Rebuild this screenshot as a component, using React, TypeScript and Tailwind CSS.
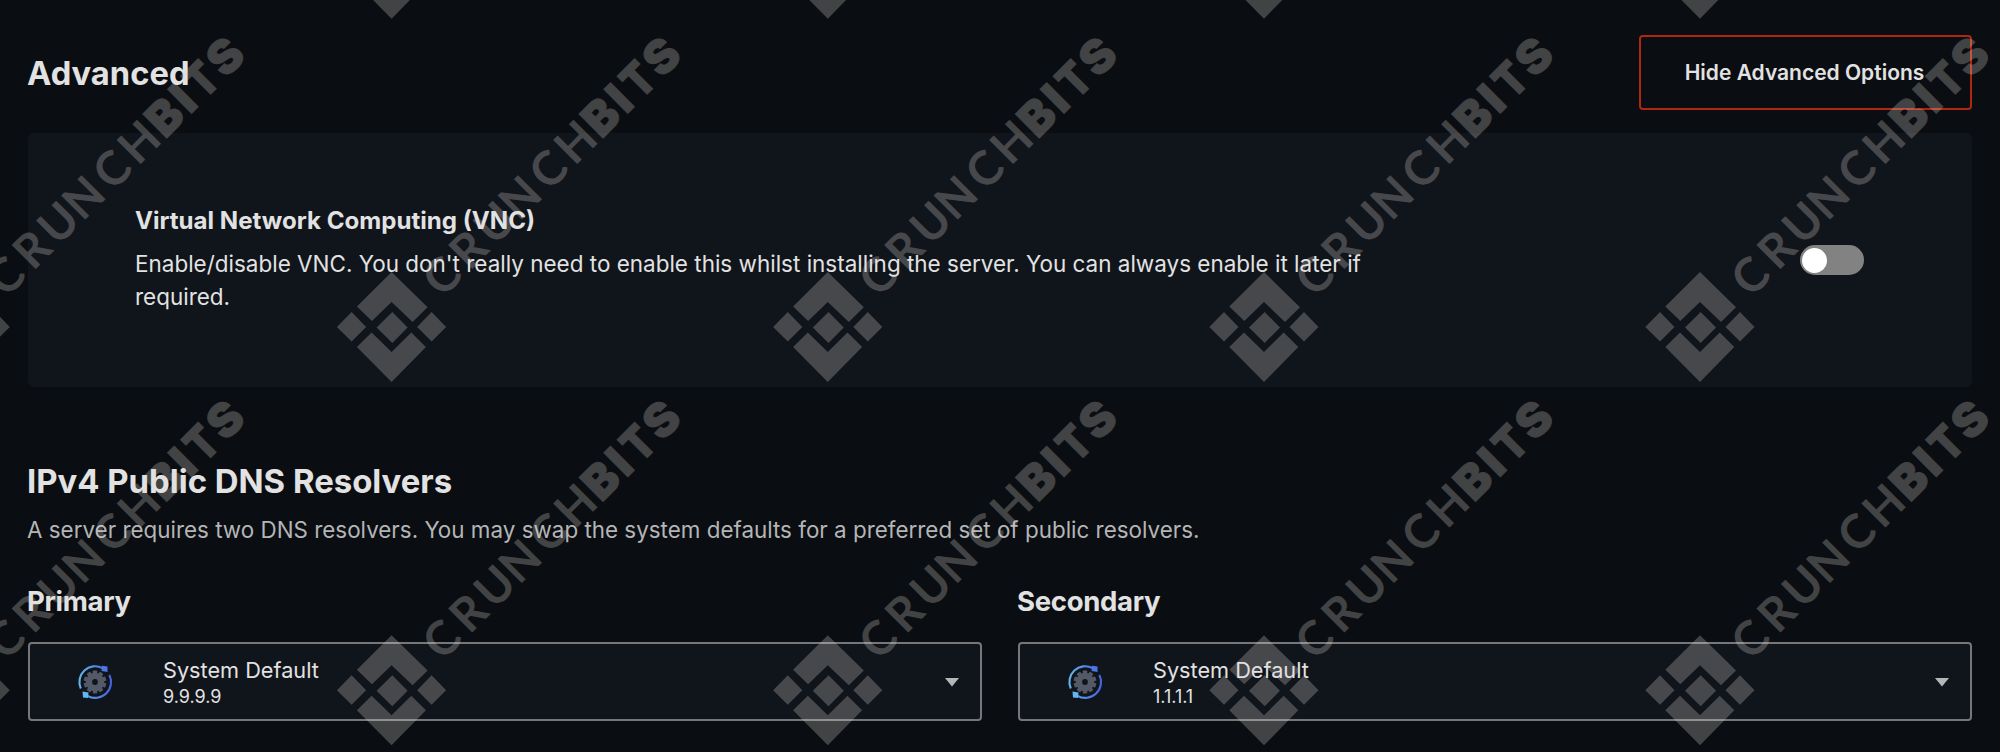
import React, { useState } from "react";

const GLYPHS = [
  { ch: "C", x: 56, black: false },
  { ch: "R", x: 94, black: false },
  { ch: "U", x: 129, black: false },
  { ch: "N", x: 164, black: false },
  { ch: "C", x: 206.5, black: false },
  { ch: "H", x: 242.5, black: false },
  { ch: "B", x: 281, black: true },
  { ch: "I", x: 316, black: true },
  { ch: "T", x: 335.5, black: true, width: 27 },
  { ch: "S", x: 366.5, black: true },
];
const COLS = [-44.7, 391.6, 827.8, 1264, 1700];
const ROWS = [-36.3, 327, 690.3];

function Brand({ x, y }: { x: number; y: number }) {
  return (
    <g transform={`translate(${x} ${y})`}>
      <path d="M0 -55L36 -19.7L21 -5L0 -25L-19.7 -6L-34.7 -20.5Z" />
      <path d="M0 55L34.3 20L19.7 5.5L0 25L-20 5.5L-34.7 20Z" />
      <path d="M-54.7 0L-40 -15L-25.5 0L-40 14.5ZM25.5 0L40 -15L54.5 0L40 14.5ZM-15 0.5L0.7 -15L16 0.5L0.7 16Z" />
      {y > 0 && (
        <g transform="rotate(-45)">
          {GLYPHS.map((g, i) => (
            <text
              key={i}
              x={g.x}
              y={16}
              className={
                g.black
                  ? "stroke-[#e0dcd6] stroke-1 font-['Inter',sans-serif] text-[46.5px] font-black"
                  : "font-['Lato',sans-serif] text-[47px] font-bold"
              }
              textLength={g.width}
              lengthAdjust={g.width ? "spacingAndGlyphs" : undefined}
            >
              {g.ch}
            </text>
          ))}
        </g>
      )}
    </g>
  );
}

function SyncGear({ id }: { id: string }) {
  return (
    <svg viewBox="0 0 36 36" className="size-9" fill="none">
      <defs>
        <linearGradient id={id} x1="1" y1="18" x2="35" y2="18" gradientUnits="userSpaceOnUse">
          <stop stopColor="#62b8f0" />
          <stop offset="1" stopColor="#4560dc" />
        </linearGradient>
      </defs>
      <g stroke={`url(#${id})`} strokeWidth="2.1">
        <path d="M3.8 24.5A15.8 15.8 0 0 1 25.5 4" />
        <path d="M32.4 11A15.8 15.8 0 0 1 10.5 31.8" />
      </g>
      <path d="M25 1.8L30.5 2.5L30.5 8L24.5 7Z" fill="#4f74ea" />
      <path d="M5.5 27.5L11.5 28.5L11 34L6 33.5Z" fill="#62b8f0" />
      <g fill="#545967">
        {[0, 36, 72, 108, 144].map((a) => (
          <rect key={a} x="15.8" y="6.6" width="4.4" height="22.8" rx="0.6" transform={`rotate(${a} 18 18)`} />
        ))}
        <circle cx="18" cy="18" r="9.2" />
      </g>
      <circle cx="18" cy="18" r="2.9" fill="#10141b" />
    </svg>
  );
}

function Resolver({ label, ip }: { label: string; ip: string }) {
  return (
    <div>
      <h3 className="-ml-px text-[27.5px] leading-9 font-bold tracking-[-0.3px]">{label}</h3>
      <button className="mt-[23px] flex h-[79px] w-full items-center rounded-[4px] border-2 border-[#75777a] bg-[#10141b] pr-5 pl-[47px] text-left">
        <SyncGear id={label} />
        <span className="ml-[50px] flex-1 pt-0.5">
          <span className="block text-[21.7px] leading-[28px]">System Default</span>
          <span className="block text-[18px] leading-[26px]">{ip}</span>
        </span>
        <svg viewBox="0 0 16 10" className="h-[10px] w-4">
          <path d="M1 1H15L8 9.5Z" fill="#b5b6b7" />
        </svg>
      </button>
    </div>
  );
}

export default function App() {
  const [vnc, setVnc] = useState(false);
  return (
    <main className="relative h-[752px] w-full overflow-hidden bg-[#0a0d11] px-7 pt-[35px] font-['Inter',sans-serif] text-[#e2e2e2]">
      <header className="flex items-center justify-between">
        <h2 className="-ml-px text-[32.7px] leading-10 font-bold">Advanced</h2>
        <button className="h-[75px] w-[333px] rounded-[4px] border-2 border-[#b02710] pr-0.5 text-[21px] font-semibold">
          Hide Advanced Options
        </button>
      </header>

      <section className="mt-[23px] flex h-[254px] items-center justify-between rounded-[5px] bg-[#10141b] pr-[108px] pl-[107px]">
        <div className="w-[1260px] pb-0.5">
          <h3 className="text-[24.1px] leading-8 font-bold">Virtual Network Computing (VNC)</h3>
          <p className="mt-2.5 text-[22.48px] leading-[33px]">
            Enable/disable VNC. You don't really need to enable this whilst installing the server. You can always enable
            it later if required.
          </p>
        </div>
        <button
          role="switch"
          aria-checked={vnc}
          onClick={() => setVnc(!vnc)}
          className="flex h-[30px] w-16 items-center rounded-full bg-[#828282] px-[2px]"
        >
          <span className="size-[25px] rounded-full bg-white" />
        </button>
      </section>

      <section className="mt-[74px]">
        <h2 className="-ml-px text-[32.9px] leading-10 font-bold">IPv4 Public DNS Resolvers</h2>
        <p className="-ml-px mt-[13px] text-[22.42px] leading-8 text-[#b4b5b6]">
          A server requires two DNS resolvers. You may swap the system defaults for a preferred set of public resolvers.
        </p>
        <div className="mt-[37px] grid grid-cols-2 gap-9">
          <Resolver label="Primary" ip="9.9.9.9" />
          <Resolver label="Secondary" ip="1.1.1.1" />
        </div>
      </section>

      <svg
        aria-hidden="true"
        viewBox="0 0 2000 752"
        className="pointer-events-none absolute inset-0 h-[752px] w-[2000px] opacity-[0.26]"
        fill="#e0dcd6"
      >
        {ROWS.map((y) => COLS.map((x) => <Brand key={`${x}/${y}`} x={x} y={y} />))}
      </svg>
    </main>
  );
}
